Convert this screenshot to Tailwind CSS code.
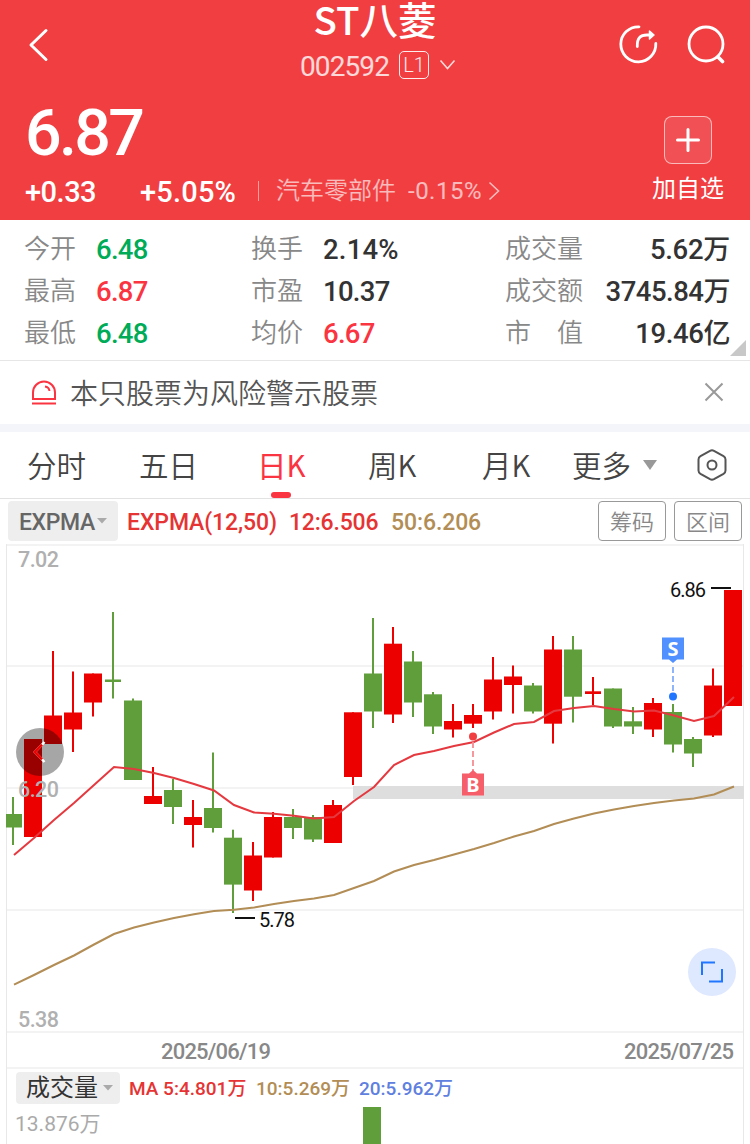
<!DOCTYPE html>
<html lang="zh-CN">
<head>
	<meta charset="UTF-8">
	<meta name="viewport" content="width=device-width, initial-scale=1.0">
	<title>ST八菱 002592</title>
	<script src="https://cdn.jsdelivr.net/npm/@tailwindcss/browser@4"></script>
</head>
<body class="w-[750px] h-[1144px] overflow-hidden bg-white font-['Roboto','Noto_Sans_CJK_SC',sans-serif] text-[#333]">
	<header class="h-[220px] bg-[#f03e41] text-white">
		<div class="flex justify-between h-[88px]">
			<div class="w-[200px] pl-[27px] pt-[28px]">
				<svg width="22" height="34" fill="none" stroke="white" stroke-width="3" stroke-linecap="round" stroke-linejoin="round"><path d="M19 2.500 L4 17 L19 31.500"/></svg>
			</div>
			<div class="flex flex-col items-center">
				<h1 class="h-[42px] leading-[37px] text-[38.5px] font-medium font-['Noto_Sans_CJK_SC',sans-serif]">ST八菱</h1>
				<div class="flex items-center h-[48px] pl-[7px]">
					<span class="pt-[4px] text-[28px] tracking-[-0.9px] text-white/80">002592</span>
					<span class="ml-[10px] w-[30px] h-[28px] leading-[27px] border border-white/90 rounded-[5px] text-center text-[20px] font-light text-white/90">L1</span>
					<svg class="ml-[10px]" width="18" height="12" fill="none" stroke="white" stroke-opacity=".8" stroke-width="1.6"><path d="M1.500 1.500 L8.500 9.500 L15.500 1.500"/></svg>
				</div>
			</div>
			<div class="flex w-[200px] justify-end pt-[24px] pr-[25px] gap-[26px]">
				<svg width="42" height="42" fill="none" stroke="white" stroke-width="2.8" stroke-linecap="round" stroke-linejoin="round">
					<path d="M22 2.800 A17.500 17.500 0 1 0 38.800 19.500"/>
					<path d="M20.300 22.500 C20 14.500 23 11 30 11 H34"/>
					<path d="M32.500 7 L37 11 L32.500 15 Z" fill="white" stroke-width="1.500"/>
				</svg>
				<svg width="40" height="42" fill="none" stroke="white" stroke-width="2.8" stroke-linecap="round">
					<circle cx="21" cy="20" r="17"/>
					<path d="M33.500 33.500 L37.500 37.500" stroke-width="3.600"/>
				</svg>
			</div>
		</div>
		<div class="flex justify-between pl-[25px] pr-[26px]">
			<div>
				<div class="h-[80px] leading-[90px] text-[64.5px] font-medium tracking-[-2.7px]">6.87</div>
				<div class="flex items-center h-[46px] text-[29px] font-medium">
					<span class="w-[115px] pt-[4px] tracking-[-0.5px]">+0.33</span>
					<span class="w-[118px] pt-[4px] tracking-[0.2px]">+5.05%</span>
					<span class="w-px h-[20px] bg-white/50"></span>
					<span class="ml-[17px] -mt-[4px] text-[24px] font-[350] text-white/65 font-['Noto_Sans_CJK_SC',sans-serif]">汽车零部件</span>
					<span class="ml-[12px] text-[24px] font-normal tracking-[0.5px] text-white/65">-0.15%</span>
					<svg class="ml-[6px]" width="12" height="20" fill="none" stroke="white" stroke-opacity=".65" stroke-width="1.6"><path d="M1.500 1.500 L10.500 10 L1.500 18.500"/></svg>
				</div>
			</div>
			<div class="flex flex-col items-center pt-[28px]">
				<div class="flex items-center justify-center w-[48px] h-[48px] border border-white/60 rounded-[8px] bg-white/10">
					<svg width="24" height="24" stroke="white" stroke-width="3" stroke-linecap="round"><path d="M1.500 12 H22.500 M12 1.500 V22.500"/></svg>
				</div>
				<span class="mt-[5px] leading-[36px] text-[24px] font-['Noto_Sans_CJK_SC',sans-serif]">加自选</span>
			</div>
		</div>
	</header>

	<section class="relative flex h-[141px] pt-[8px] border-b border-[#e6e6e6] leading-[42px] text-[27.5px] font-medium">
		<div class="w-[251px] pl-[24px]">
			<div class="flex h-[42px]"><span class="w-[72px] text-[26px] font-[350] text-[#888]">今开</span><span class="pt-px tracking-[-0.7px] text-[#00ab58]">6.48</span></div>
			<div class="flex h-[42px]"><span class="w-[72px] text-[26px] font-[350] text-[#888]">最高</span><span class="pt-px tracking-[-0.7px] text-[#fb3441]">6.87</span></div>
			<div class="flex h-[42px]"><span class="w-[72px] text-[26px] font-[350] text-[#888]">最低</span><span class="pt-px tracking-[-0.7px] text-[#00ab58]">6.48</span></div>
		</div>
		<div class="w-[254px]">
			<div class="flex h-[42px]"><span class="w-[72px] text-[26px] font-[350] text-[#888]">换手</span><span class="pt-px tracking-[0.2px]">2.14%</span></div>
			<div class="flex h-[42px]"><span class="w-[72px] text-[26px] font-[350] text-[#888]">市盈</span><span class="pt-px tracking-[-0.7px]">10.37</span></div>
			<div class="flex h-[42px]"><span class="w-[72px] text-[26px] font-[350] text-[#888]">均价</span><span class="pt-px tracking-[-0.7px] text-[#fb3441]">6.67</span></div>
		</div>
		<div class="w-[225px]">
			<div class="flex justify-between h-[42px]"><span class="text-[26px] font-[350] text-[#888]">成交量</span><span class="pt-px tracking-[-0.3px]">5.62<span class="text-[27px]">万</span></span></div>
			<div class="flex justify-between h-[42px]"><span class="text-[26px] font-[350] text-[#888]">成交额</span><span class="pt-px tracking-[-0.5px]">3745.84<span class="text-[27px]">万</span></span></div>
			<div class="flex justify-between h-[42px]"><span class="text-[26px] font-[350] text-[#888]">市　值</span><span class="pt-px tracking-[-0.4px]">19.46<span class="text-[27px]">亿</span></span></div>
		</div>
		<svg class="absolute left-[730px] top-[120px]" width="16" height="16"><path d="M16 0 V16 H0 Z" fill="#c8c8c8"/></svg>
	</section>

	<section class="flex items-center h-[63px] pl-[31px] pr-[26px]">
		<svg width="26" height="26" fill="none" stroke="#fb3441" stroke-width="2">
			<path d="M2 19 V12.500 A11 11 0 0 1 24 12.500 V19 Z"/>
			<path d="M1 23.500 H25"/>
			<path d="M14 6.500 Q18 7 18.500 11"/>
		</svg>
		<span class="ml-[13px] -mt-px text-[28px] font-[350] text-[#555] font-['Noto_Sans_CJK_SC',sans-serif]">本只股票为风险警示股票</span>
		<svg class="ml-auto -mt-px" width="20" height="20" stroke="#999" stroke-width="2"><path d="M1.500 1.500 L18.500 18.500 M18.500 1.500 L1.500 18.500"/></svg>
	</section>

	<div class="h-[8px] bg-[#f4f5fa]"></div>

	<nav class="flex h-[67px] pl-[27px] border-b border-[#e2e2e2] leading-[64px] text-[29.5px] text-[#444] font-[350] font-['Noto_Sans_CJK_SC',sans-serif]">
		<span class="w-[112px]">分时</span>
		<span class="w-[118px]">五日</span>
		<span class="relative w-[111px] font-normal text-[#fb3441]">日K<i class="absolute left-[14px] bottom-0 w-[20px] h-[6px] rounded-full bg-[#fb3441]"></i></span>
		<span class="w-[114px]">周K</span>
		<span class="w-[90px]">月K</span>
		<span>更多</span>
		<span class="flex items-center ml-[12px]"><svg width="14" height="10"><path d="M0 0 H14 L7 10 Z" fill="#999"/></svg></span>
		<span class="flex items-center ml-[40px]">
			<svg width="30" height="32" fill="none" stroke="#555" stroke-width="2" stroke-linejoin="round">
				<path d="M13 1.800 Q15 .8 17 1.800 L26.500 7.200 Q28.500 8.400 28.500 10.500 V21.500 Q28.500 23.600 26.500 24.800 L17 30.200 Q15 31.200 13 30.200 L3.500 24.800 Q1.500 23.600 1.500 21.500 V10.500 Q1.500 8.400 3.500 7.200 Z"/>
				<circle cx="15" cy="16" r="4.500"/>
			</svg>
		</span>
	</nav>

	<div class="flex h-[45px] pt-[2px] pl-[8px] pr-[8px] leading-[44px] text-[23px] font-medium">
		<div class="flex items-center w-[110px] h-[40px] pl-[11px] rounded bg-[#eee] text-[#666]">
			<span class="pt-[3px] tracking-[-0.4px]">EXPMA</span>
			<svg class="ml-[2px]" width="10" height="6"><path d="M0 0 H10 L5 5.500 Z" fill="#aaa"/></svg>
		</div>
		<span class="ml-[9px] w-[162px] tracking-[-0.1px] text-[#e53433]">EXPMA(12,50)</span>
		<span class="w-[102px] tracking-[-0.2px] text-[#e53433]">12:6.506</span>
		<span class="tracking-[-0.1px] text-[#b28d55]">50:6.206</span>
		<div class="flex ml-auto gap-[8px] leading-[36px] text-[22px] font-[350] text-[#888] text-center font-['Noto_Sans_CJK_SC',sans-serif]">
			<span class="w-[68px] h-[40px] border border-[#999] rounded">筹码</span>
			<span class="w-[68px] h-[40px] border border-[#999] rounded">区间</span>
		</div>
	</div>

	<svg class="block" id="kline" width="750" height="525" viewBox="0 544 750 525">
		<g stroke="#f3f3f3" stroke-width="2">
			<path d="M6 545 H744 M6 666 H744 M6 788 H744 M6 910 H744 M6 1032 H744 M6 1068 H744"/>
			<path d="M6.500 544 V1069 M743.500 544 V1069" stroke="#e8e8e8" stroke-width="1"/>
		</g>
		<rect x="353" y="786" width="391" height="13" fill="#dedede"/>
		<g id="candles"></g>
		<g fill="#b0b0b0" font-size="21.500" font-weight="500">
			<text x="18" y="567" textLength="41">7.02</text>
			<text x="18" y="797" textLength="41">6.20</text>
			<text x="18" y="1027" textLength="41">5.38</text>
		</g>
		<polyline id="ema50" fill="none" stroke="#b28d55" stroke-width="2"/>
		<polyline id="ema12" fill="none" stroke="#e53940" stroke-width="2"/>
		<g fill="#111" font-size="20">
			<text x="670" y="596.500" textLength="36">6.86</text>
			<text x="259" y="926.500" textLength="36">5.78</text>
			<path d="M711 588 H731 M235 918 H255" stroke="#111" stroke-width="2"/>
		</g>
		<g fill="#888" font-size="22" font-weight="500">
			<text x="161" y="1059" textLength="110">2025/06/19</text>
			<text x="624" y="1059" textLength="110">2025/07/25</text>
		</g>

		<!-- buy marker -->
		<circle cx="473" cy="736.500" r="4" fill="#f03e41"/>
		<path d="M473 742 V771" stroke="#f78d93" stroke-width="1.800" stroke-dasharray="6 3"/>
		<path d="M462 773.500 H469 L473 770 L477 773.500 H484 V795.500 H462 Z" fill="#f65f69"/>
		<text x="473" y="791.500" text-anchor="middle" fill="#fff" font-size="20" font-weight="700" font-family="Noto Sans">B</text>
		<!-- sell marker -->
		<circle cx="673" cy="696.500" r="4" fill="#2176ff"/>
		<path d="M673 667 V692" stroke="#85adfb" stroke-width="1.800" stroke-dasharray="6 3"/>
		<path d="M662 637.500 H684 V659.500 H677 L673 663 L669 659.500 H662 Z" fill="#5090ff"/>
		<text x="673" y="655.500" text-anchor="middle" fill="#fff" font-size="20" font-weight="700" font-family="Noto Sans">S</text>

		<!-- previous button -->
		<circle cx="40" cy="752" r="24" fill="#000" fill-opacity=".35"/>
		<path d="M44.500 742 L35 752 L44.500 762" fill="none" stroke="#fff" stroke-width="2.500"/>
		<path d="M42 744.600 L35 752 L42 759.400" fill="none" stroke="#ec0000" stroke-width="2.500"/>

		<!-- full screen button -->
		<circle cx="712" cy="972" r="24" fill="#dee8fe"/>
		<path d="M702 975 V962.500 H715 M722 969 V981.500 H709" fill="none" stroke="#2176ff" stroke-width="2"/>
	</svg>

	<section class="h-[75px] ml-[6px] mr-[6px] border-x border-[#e8e8e8]">
		<div class="flex items-center h-[38px] pl-[9px] text-[19px] font-medium">
			<div class="flex items-center w-[104px] h-[32px] pl-[10px] rounded bg-[#eee] text-[24px] font-normal text-[#333] font-['Noto_Sans_CJK_SC',sans-serif]">
				<span class="-mt-[4px] leading-[30px]">成交量</span>
				<svg class="ml-[5px]" width="10" height="6"><path d="M0 0 H10 L5 5.500 Z" fill="#aaa"/></svg>
			</div>
			<span class="ml-[9px] w-[127px] pt-[3px] text-[#e53433]">MA 5:4.801万</span>
			<span class="w-[103px] pt-[3px] text-[#b28d55]">10:5.269万</span>
			<span class="pt-[3px] text-[#6080e0]">20:5.962万</span>
		</div>
		<div class="flex h-[37px]">
			<span class="w-[356px] pl-[8px] leading-[34px] text-[21px] text-[#aaa]">13.876万</span>
			<div class="w-[18px] h-[37px] bg-[#5f9e3a]"></div>
		</div>
	</section>
</body>
<script>
const STEP = 20;
const UP = "#ec0000";
const DOWN = "#5f9e3a";

// [rising, body top, body bottom, high, low]
const candles = [
	[0, 814, 827.5, 797, 845], [1, 739, 837, 739, 837], [1, 715.5, 744, 651, 744],
	[1, 712.5, 729.5, 671.5, 752], [1, 673.5, 702.5, 673.5, 716.5], [0, 679.5, 682, 612, 698.5],
	[0, 700.5, 780, 698.5, 780], [1, 796, 804, 767, 804], [0, 790, 807, 779, 824],
	[1, 817, 825, 800, 847.5], [0, 808, 828, 752.5, 832.5], [0, 837.7, 884.6, 829.7, 913],
	[1, 855.5, 890.5, 842, 901], [1, 817, 857.5, 812, 857.5], [0, 817, 828, 809, 839],
	[0, 817, 839.5, 815, 842], [1, 805, 843, 800, 843], [1, 712.3, 777, 712.3, 785],
	[0, 673.5, 711.5, 618, 728], [1, 643.7, 714.5, 627, 723], [0, 661.5, 702.5, 651, 717],
	[0, 694.3, 726.5, 692, 734], [1, 721, 729.5, 704, 737.5], [1, 715, 723.7, 704, 728],
	[1, 679.5, 711.5, 657, 719.5], [1, 676.5, 685, 665.5, 713.5], [0, 685.5, 711.5, 683, 713.5],
	[1, 649.5, 723.7, 636, 743.5], [0, 649.5, 696.7, 636, 722.5], [1, 691.3, 694, 677, 705],
	[0, 688.5, 726.5, 688.5, 728], [0, 721.3, 726.5, 707, 734], [1, 703, 729.5, 698, 737],
	[0, 712, 744.5, 704, 752.5], [0, 739, 753.5, 737, 767], [1, 685.5, 735.5, 668.5, 737],
	[1, 590, 706, 590, 706],
];

const ema12 = [855, 838, 820, 803, 785, 767, 769, 773, 778, 784, 790.5, 805, 812.5, 813.7, 815.7, 818.5, 817, 801, 787, 765, 755, 751, 746, 742, 732.5, 724, 722, 711, 708, 706, 709, 711.5, 710.5, 715.5, 721, 716, 697];
const ema50 = [984.7, 975, 965, 955.5, 944.5, 934, 927.5, 922.5, 918, 914.3, 911, 909.7, 907.5, 904, 901, 898.5, 895, 888, 881, 871.5, 865, 860, 854.5, 849, 843, 836.5, 831, 824, 818.5, 813.5, 809.5, 806, 803, 800.5, 798.5, 794.5, 786.5];

function toPoints(values) {
	return values.map((y, i) => (14 + STEP * i) + "," + y).join(" ");
}

document.getElementById("candles").innerHTML = candles.map(([up, top, bottom, high, low], i) => {
	let x = 13 + STEP * i;
	let half = bottom - top < 3 ? 8 : 9;
	let left = Math.max(6, x - half);
	return `<g fill="${up ? UP : DOWN}">
		<rect x="${left}" y="${top}" width="${x + half - left}" height="${bottom - top}"/>
		<rect x="${x - 1}" y="${high}" width="2" height="${low - high}"/>
	</g>`;
}).join("");

document.getElementById("ema12").setAttribute("points", toPoints(ema12));
document.getElementById("ema50").setAttribute("points", toPoints(ema50));
</script>
</html>
